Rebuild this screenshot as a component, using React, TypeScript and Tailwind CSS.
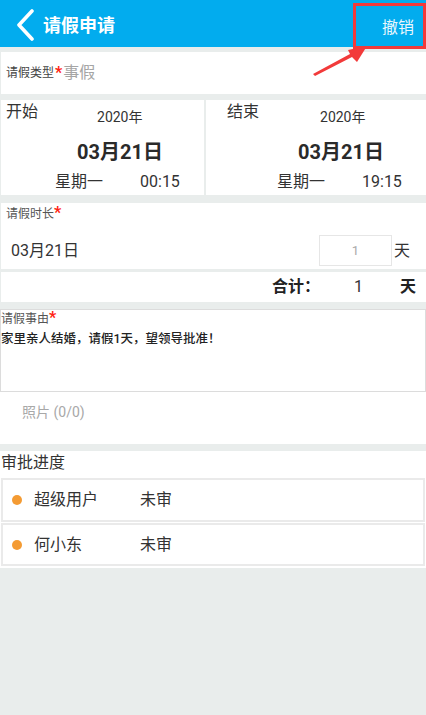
import React from "react";

const font = { fontFamily: 'Roboto, "Noto Sans CJK SC", "Noto Sans", sans-serif' };

export default function App() {
  return (
    <div className="relative w-[426px] min-h-[715px] bg-[#e9edec] text-[#333]" style={font}>
      {/* Header */}
      <div className="h-[47px] bg-[#02acee] flex items-center pt-[8px]">
        <svg width="20" height="32" viewBox="0 0 20 32" className="ml-[15px] -mt-[6px]">
          <path d="M17 2 L4 16 L17 30" fill="none" stroke="#fff" strokeWidth="3.6" strokeLinecap="round" strokeLinejoin="round" />
        </svg>
        <span className="ml-[8px] -mt-[3px] text-[18px] font-bold text-white leading-[24px]">请假申请</span>
        <span className="ml-auto mr-[12px] text-[16px] text-[#eaf7fd] leading-[24px]">撤销</span>
      </div>

      {/* Type */}
      <div className="mt-[5px] ml-[1px] h-[42px] bg-white flex items-center pl-[5px]">
        <span className="text-[12px] text-[#444]">请假类型</span>
        <span className="text-[16px] text-[#f21] font-bold leading-none mx-[1px]">*</span>
        <span className="text-[16px] text-[#a5a5a5]">事假</span>
      </div>

      {/* Dates */}
      <div className="mt-[6px] flex gap-[2px] h-[95px] pl-[1px]">
        <div className="w-[203px] bg-white flex flex-col">
          <div className="h-[29px] flex items-start">
            <span className="ml-[5px] text-[16px] leading-[24px]">开始</span>
            <span className="ml-[59px] mt-[5px] text-[14px] leading-[24px]">2020年</span>
          </div>
          <div className="mt-[9px] pl-[76px] text-[20px] font-bold leading-[28px] text-[#2a2a2a]">03月21日</div>
          <div className="mt-[4px] flex text-[16px] leading-[24px]">
            <span className="ml-[54px]">星期一</span>
            <span className="ml-[37px]">00:15</span>
          </div>
        </div>
        <div className="flex-1 bg-white flex flex-col">
          <div className="h-[29px] flex items-start">
            <span className="ml-[21px] text-[16px] leading-[24px]">结束</span>
            <span className="ml-[61px] mt-[5px] text-[14px] leading-[24px]">2020年</span>
          </div>
          <div className="mt-[9px] pl-[92px] text-[20px] font-bold leading-[28px] text-[#2a2a2a]">03月21日</div>
          <div className="mt-[4px] flex text-[16px] leading-[24px]">
            <span className="ml-[71px]">星期一</span>
            <span className="ml-[37px]">19:15</span>
          </div>
        </div>
      </div>

      {/* Duration */}
      <div className="mt-[8px] ml-[1px] h-[66px] bg-white flex flex-col">
        <div className="pt-[3px] pl-[5px] flex items-start leading-[16px]">
          <span className="text-[12px] text-[#555]">请假时长</span>
          <span className="text-[16px] text-[#f21] font-bold leading-[14px]">*</span>
        </div>
        <div className="mt-[13px] h-[31px] flex items-center">
          <span className="ml-[10px] text-[16px]">03月21日</span>
          <div className="ml-auto w-[73px] h-[31px] border border-[#e6e6e6] flex items-center justify-center text-[13px] text-[#aaa]">1</div>
          <span className="ml-[2px] mr-[16px] text-[16px]">天</span>
        </div>
      </div>

      {/* Total */}
      <div className="mt-[3px] ml-[1px] h-[30px] bg-white flex items-center text-[16px]">
        <span className="ml-[271px] font-bold text-[#222]">合计：</span>
        <span className="ml-[34px]">1</span>
        <span className="ml-[37px] font-bold text-[#222]">天</span>
      </div>

      {/* Reason */}
      <div className="mt-[7px] h-[83px] bg-white border border-[#dcdcdc] flex flex-col">
        <div className="pt-[1px] flex items-start leading-[16px]">
          <span className="text-[12px] text-[#555]">请假事由</span>
          <span className="text-[16px] text-[#f21] font-bold leading-[14px]">*</span>
        </div>
        <div className="mt-[4px] text-[12.5px] leading-[16px] font-medium text-[#222]">家里亲人结婚，请假1天，望领导批准！</div>
      </div>

      {/* Photo */}
      <div className="h-[52px] bg-white pt-[10px] pl-[22px] text-[14px] leading-[20px] text-[#a8a8a8]">照片 (0/0)</div>

      {/* Approvals */}
      <div className="mt-[7px] bg-white pb-[2px]">
        <div className="h-[27px] text-[16px] leading-[24px] pl-[1px]">审批进度</div>
        <div className="mx-[1px] h-[44px] border-[2px] border-[#eaeaea] flex items-center">
          <span className="ml-[9px] w-[10px] h-[10px] rounded-full bg-[#f49b33]" />
          <span className="ml-[12px] text-[16px] w-[106px]">超级用户</span>
          <span className="text-[16px]">未审</span>
        </div>
        <div className="mt-[1px] mx-[1px] h-[43px] border-[2px] border-[#eaeaea] flex items-center">
          <span className="ml-[9px] w-[10px] h-[10px] rounded-full bg-[#f49b33]" />
          <span className="ml-[12px] text-[16px] w-[106px]">何小东</span>
          <span className="text-[16px]">未审</span>
        </div>
      </div>

      {/* Annotation overlay */}
      <div className="absolute left-[353px] top-[3px] w-[73px] h-[46px] border-[3px] border-[#f23a3a]" />
      <svg className="absolute left-0 top-0" width="426" height="100" viewBox="0 0 426 100">
        <polygon points="313,74 350,54 348,50 367,46 357,62 352,57 315,76" fill="#f23a3a" />
      </svg>
    </div>
  );
}
